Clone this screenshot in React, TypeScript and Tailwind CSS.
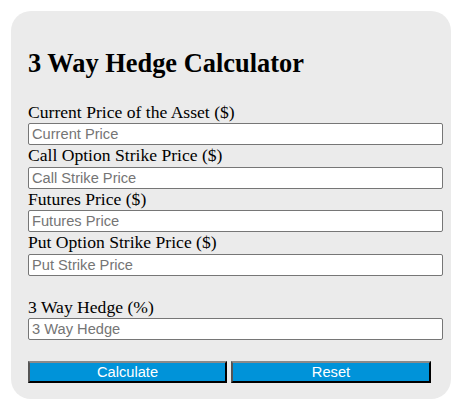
const fields = [
  { label: "Current Price of the Asset ($)", placeholder: "Current Price" },
  { label: "Call Option Strike Price ($)", placeholder: "Call Strike Price" },
  { label: "Futures Price ($)", placeholder: "Futures Price" },
  { label: "Put Option Strike Price ($)", placeholder: "Put Strike Price" },
]

function Field({ label, placeholder }: { label: string; placeholder: string }) {
  return (
    <div className="flex flex-col">
      <label className="block h-[21.5px] whitespace-nowrap text-[17.6px] leading-[21px] text-black">{label}</label>
      <input
        type="text"
        placeholder={placeholder}
        className="box-border h-[22px] w-[415px] rounded-[2px] border border-[#767676] bg-white px-[3px] font-['Liberation_Sans',Arial,sans-serif] text-[14.67px] text-black placeholder:text-[#757575] outline-none"
      />
    </div>
  )
}

export default function App() {
  return (
    <div className="min-h-[409px] bg-white p-[11px] font-['Liberation_Serif','Times_New_Roman',serif]">
      <div className="w-[440px] rounded-[20px] bg-[#ebebeb] pt-[38px] pb-[16px] pl-[17px]">
        <h2 className="mb-[24.5px] whitespace-nowrap text-[26.4px] leading-[28px] font-bold text-black">
          3 Way Hedge Calculator
        </h2>

        {fields.map((f) => (
          <Field key={f.label} label={f.label} placeholder={f.placeholder} />
        ))}

        {/* result */}
        <div className="mt-[21px]">
          <Field label="3 Way Hedge (%)" placeholder="3 Way Hedge" />
        </div>

        <div className="mt-[21px] flex gap-[4px]">
          <button className="h-[22px] w-[199px] border-2 border-t-[#8a8a8a] border-l-[#555] border-r-black border-b-black bg-[#0093d9] font-['Liberation_Sans',Arial,sans-serif] text-[14.67px] leading-none text-white">
            Calculate
          </button>
          <button className="h-[22px] w-[200px] border-2 border-t-[#8a8a8a] border-l-[#555] border-r-black border-b-black bg-[#0093d9] font-['Liberation_Sans',Arial,sans-serif] text-[14.67px] leading-none text-white">
            Reset
          </button>
        </div>
      </div>
    </div>
  )
}
